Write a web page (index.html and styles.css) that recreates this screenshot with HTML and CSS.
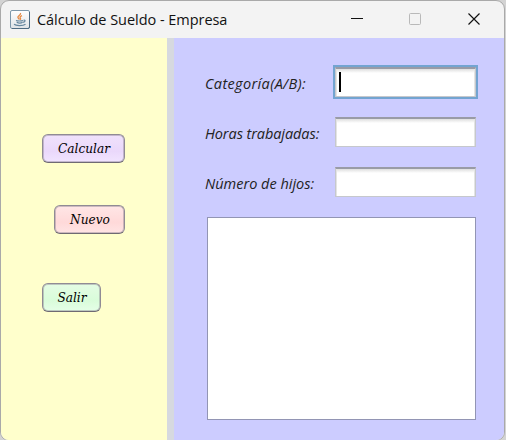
FILE: index.html
```html
<!DOCTYPE html>
<html lang="es">
<head>
<meta charset="utf-8">
<title>Cálculo de Sueldo - Empresa</title>
<link rel="stylesheet" href="styles.css">
</head>
<body>
<div class="window">
  <header class="titlebar">
    <svg class="java" width="20" height="19" viewBox="0 0 20 19" fill="none">
      <defs><linearGradient id="tile" x2="0" y2="1"><stop stop-color="#fff"/><stop offset="1" stop-color="#dfe3e7"/></linearGradient></defs>
      <rect x=".5" y=".5" width="19" height="18" rx="1.5" fill="url(#tile)" stroke="#7d97aa"/>
      <path d="M19.5 2v15q0 1.500-1.500 1.500H2" stroke="#4e6b82"/>
      <path d="M10.500 3c1 2-3 2.700-2.600 4.300.2.900 1.200 1.300 1.500 2.200M12 5.700c-2 .8-2.400 1.600-1.600 2.400.5.600.2 1.100-.3 1.600" stroke="#e58a45" stroke-width="1.300"/>
      <path d="M6 10.500c1.500.7 5.500.7 7 0M6.700 12.300c1.500.8 4.500.8 6 0M13.500 10.200c2.300-.5 2 1.700-.4 2.200M4 14.300c2 1.700 9 1.700 11.500-.1" stroke="#66879f" stroke-width="1.150"/>
    </svg>
    <h1 class="title">Cálculo de Sueldo - Empresa</h1>
    <svg class="controls" width="132" height="16" viewBox="0 0 132 16" fill="none">
      <path d="M1 7.500h12" stroke="#111"/>
      <rect x="59.500" y="2.500" width="11" height="11" rx="1" stroke="#b9b9b9"/>
      <path d="M118.500 2.500l11 11M129.500 2.500l-11 11" stroke="#111" stroke-width="1.150"/>
    </svg>
  </header>
  <main class="split">
    <nav class="actions">
      <button class="btn lilac">Calcular</button>
      <button class="btn pink">Nuevo</button>
      <button class="btn green">Salir</button>
    </nav>
    <div class="divider"></div>
    <section class="form">
      <div class="row"><label class="label categoria" for="cat">Categoría(A/B):</label><div class="field focused" id="cat"><i class="caret"></i></div></div>
      <div class="row"><label class="label horas" for="hrs">Horas trabajadas:</label><div class="field" id="hrs"></div></div>
      <div class="row"><label class="label hijos" for="hij">Número de hijos:</label><div class="field" id="hij"></div></div>
      <div class="output"></div>
    </section>
  </main>
</div>
</body>
</html>
```
FILE: styles.css
```css
* { box-sizing: border-box; }
html { height: 100%; }
body { margin: 0; height: 440px; overflow: hidden; background: #d3d3d3; }
.window {
  display: flex;
  flex-direction: column;
  width: 505px;
  height: 441px;
  border: 1px solid #a9a9a9;
  border-radius: 9px;
  overflow: hidden;
  background: #f3f3f3;
}
.titlebar { display: flex; align-items: center; flex: 0 0 37px; padding-left: 9px; }
.java { flex: none; margin-top: -1px; }
.title {
  width: 190px;
  margin: 0 0 0 7px;
  font: 400 14.500px/20px "Open Sans", sans-serif;
  letter-spacing: -.04px;
  white-space: nowrap;
  color: #111;
}
.controls { margin-left: 123px; margin-top: -1px; }
.split { display: flex; flex: 1; }
.actions {
  display: flex;
  flex-direction: column;
  align-items: flex-start;
  width: 166px;
  padding: 96px 0 0 41px;
  background: #ffffcc;
}
.divider { width: 7px; background: #d6d9df; }
.form { flex: 1; padding: 27px 0 0 31px; background: #ccccff; }
.btn {
  height: 29px;
  padding: 0 0 0 1px;
  border: 1px solid #908b95;
  border-bottom-color: #6f6a73;
  border-radius: 6px;
  box-shadow: inset 0 0 0 1px rgba(130, 120, 135, .4);
  font: italic 13.500px/27px "DejaVu Serif Condensed", "DejaVu Serif", serif;
  color: #000;
}
.lilac { width: 83px; background: linear-gradient(#f0e2fc, #ead8fb 60%, #f1e4ff); }
.pink { width: 71px; margin: 42px 0 0 12px; background: linear-gradient(#ffe6e6, #ffd9d9 60%, #ffe4e4); }
.green { width: 59px; margin-top: 49px; background: linear-gradient(#e4fce4, #d9fcda 60%, #e5ffe7); }
.row { display: flex; align-items: center; height: 34px; margin-bottom: 16px; }
.label {
  width: 130px;
  padding-top: 3px;
  font: italic 14.500px/20px "Open Sans", sans-serif;
  white-space: nowrap;
  color: #222;
}
.categoria { letter-spacing: .35px; }
.horas { letter-spacing: -.08px; }
.hijos { letter-spacing: 0; }
.field {
  width: 141px;
  height: 30px;
  border: 1px solid #c6c8cc;
  border-top: 2px solid #999ba6;
  background: linear-gradient(#dedede, #fff 4px);
  box-shadow: inset 1px 0 #e4e4e4, inset -1px 0 #e4e4e4;
}
.focused { outline: 2px solid #73a4d1; padding: 3px 0 0 3px; }
.caret { display: block; width: 2px; height: 20px; background: #000; }
.output {
  width: 269px;
  height: 203px;
  margin: 18px 0 0 2px;
  border: 1px solid #9295b4;
  background: #fff;
}
```
